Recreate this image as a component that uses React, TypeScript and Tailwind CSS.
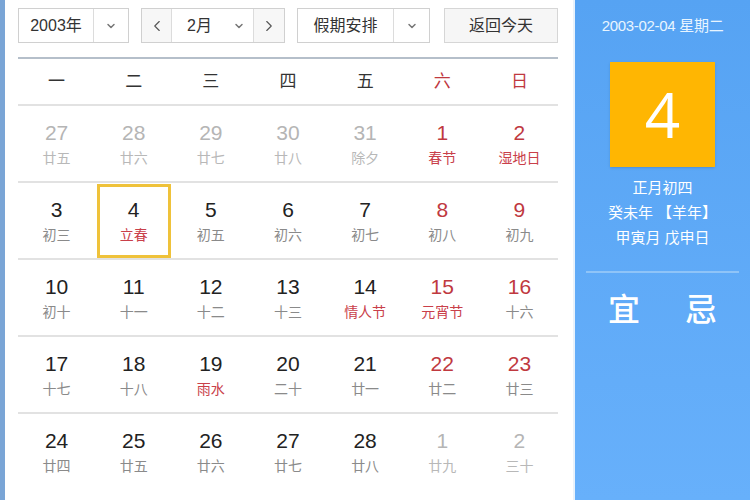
import { ChevronDown, ChevronLeft, ChevronRight } from "lucide-react";

type Day = { n: number; lunar: string; dim?: boolean; red?: boolean; lunarRed?: boolean; selected?: boolean };

const weekdays = ["一", "二", "三", "四", "五", "六", "日"];

const weeks: Day[][] = [
  [
    { n: 27, lunar: "廿五", dim: true },
    { n: 28, lunar: "廿六", dim: true },
    { n: 29, lunar: "廿七", dim: true },
    { n: 30, lunar: "廿八", dim: true },
    { n: 31, lunar: "除夕", dim: true },
    { n: 1, lunar: "春节", red: true, lunarRed: true },
    { n: 2, lunar: "湿地日", red: true, lunarRed: true },
  ],
  [
    { n: 3, lunar: "初三" },
    { n: 4, lunar: "立春", lunarRed: true, selected: true },
    { n: 5, lunar: "初五" },
    { n: 6, lunar: "初六" },
    { n: 7, lunar: "初七" },
    { n: 8, lunar: "初八", red: true },
    { n: 9, lunar: "初九", red: true },
  ],
  [
    { n: 10, lunar: "初十" },
    { n: 11, lunar: "十一" },
    { n: 12, lunar: "十二" },
    { n: 13, lunar: "十三" },
    { n: 14, lunar: "情人节", lunarRed: true },
    { n: 15, lunar: "元宵节", red: true, lunarRed: true },
    { n: 16, lunar: "十六", red: true },
  ],
  [
    { n: 17, lunar: "十七" },
    { n: 18, lunar: "十八" },
    { n: 19, lunar: "雨水", lunarRed: true },
    { n: 20, lunar: "二十" },
    { n: 21, lunar: "廿一" },
    { n: 22, lunar: "廿二", red: true },
    { n: 23, lunar: "廿三", red: true },
  ],
  [
    { n: 24, lunar: "廿四" },
    { n: 25, lunar: "廿五" },
    { n: 26, lunar: "廿六" },
    { n: 27, lunar: "廿七" },
    { n: 28, lunar: "廿八" },
    { n: 1, lunar: "廿九", dim: true },
    { n: 2, lunar: "三十", dim: true },
  ],
];

function DayCell({ d }: { d: Day }) {
  const numColor = d.dim ? "text-[#b5b5b5]" : d.red ? "text-[#c0393f]" : "text-[#222]";
  const lunarColor = d.lunarRed ? "text-[#c9404a]" : d.dim ? "text-[#b8b8b8]" : "text-[#8a8a8a]";
  return (
    <div className="flex items-center justify-center h-[75px]">
      <div
        className={`flex flex-col items-center justify-center w-[74px] h-[74px] ${
          d.selected ? "border-[3px] border-[#efc23a]" : ""
        }`}
      >
        <span className={`text-[21px] leading-[26px] ${numColor}`}>{d.n}</span>
        <span className={`mt-[2px] text-[14px] leading-[20px] ${lunarColor}`}>{d.lunar}</span>
      </div>
    </div>
  );
}

export default function App() {
  return (
    <div className="flex w-[750px] h-[500px] overflow-hidden bg-white font-['Liberation_Sans','Noto_Sans_CJK_SC',sans-serif]">
      <div className="w-[5px] bg-[#7aa5d6]" />

      {/* 日历主体 */}
      <div className="w-[568px] pl-[13px] pr-[15px] pt-[8px]">
        <div className="flex items-center h-[35px] text-[16px] text-[#333]">
          <div className="flex h-full w-[111px] border border-[#d0d0d0] bg-white">
            <div className="flex-1 flex items-center justify-center border-r border-[#dcdcdc]">2003年</div>
            <div className="w-[34px] flex items-center justify-center">
              <ChevronDown className="w-3 h-3 text-[#777]" strokeWidth={3} />
            </div>
          </div>

          <div className="flex h-full w-[144px] ml-[12px] border border-[#d0d0d0] bg-white">
            <div className="w-[30px] flex items-center justify-center border-r border-[#dcdcdc] bg-[#f7f7f7]">
              <ChevronLeft className="w-[18px] h-[18px] text-[#555]" strokeWidth={1.5} />
            </div>
            <div className="flex-1 flex items-center pl-[15px] border-r border-[#dcdcdc]">
              <span className="flex-1">2月</span>
              <ChevronDown className="w-3 h-3 text-[#777] mr-[8px]" strokeWidth={3} />
            </div>
            <div className="w-[30px] flex items-center justify-center bg-[#f7f7f7]">
              <ChevronRight className="w-[18px] h-[18px] text-[#555]" strokeWidth={1.5} />
            </div>
          </div>

          <div className="flex h-full w-[133px] ml-[12px] border border-[#d0d0d0] bg-white">
            <div className="flex-1 flex items-center justify-center border-r border-[#dcdcdc]">假期安排</div>
            <div className="w-[35px] flex items-center justify-center">
              <ChevronDown className="w-3 h-3 text-[#777]" strokeWidth={3} />
            </div>
          </div>

          <div className="flex h-full w-[114px] ml-auto items-center justify-center border border-[#d6d6d6] bg-[#f6f6f6]">
            返回今天
          </div>
        </div>

        <div className="mt-[14px] border-t-2 border-[#b5bfca]" />

        <div className="grid grid-cols-7 h-[47px] items-center text-[17px] text-[#333] border-b-2 border-[#e2e2e2]">
          {weekdays.map((w, i) => (
            <div key={w} className={`text-center ${i >= 5 ? "text-[#c0393f]" : ""}`}>
              {w}
            </div>
          ))}
        </div>

        {weeks.map((week, wi) => (
          <div
            key={wi}
            className={`grid grid-cols-7 ${wi < weeks.length - 1 ? "border-b-2 border-[#e2e2e2]" : ""}`}
          >
            {week.map((d, di) => (
              <DayCell key={di} d={d} />
            ))}
          </div>
        ))}
      </div>

      {/* 右侧信息 */}
      <div className="flex-1 flex flex-col items-center bg-gradient-to-b from-[#56a3f3] to-[#67b0fb] border-l-2 border-[#e8f2fc] text-white">
        <div className="mt-[15px] text-[15px] text-[#e8f5ff] tracking-[-0.3px]">2003-02-04 星期二</div>
        <div className="mt-[24px] w-[105px] h-[105px] bg-[#ffb602] flex items-center justify-center shadow-sm">
          <span className="text-[62px] leading-none font-['Open_Sans',sans-serif]">4</span>
        </div>
        <div className="mt-[8px] flex flex-col items-center text-[15px] leading-[25px]">
          <span>正月初四</span>
          <span>癸未年 【羊年】</span>
          <span>甲寅月 戊申日</span>
        </div>
        <div className="mt-[21px] w-[153px] border-t-2 border-[#8fc4f8]" />
        <div className="mt-[21px] flex gap-[45px] text-[32px] leading-[32px] font-medium">
          <span>宜</span>
          <span>忌</span>
        </div>
      </div>
    </div>
  );
}
